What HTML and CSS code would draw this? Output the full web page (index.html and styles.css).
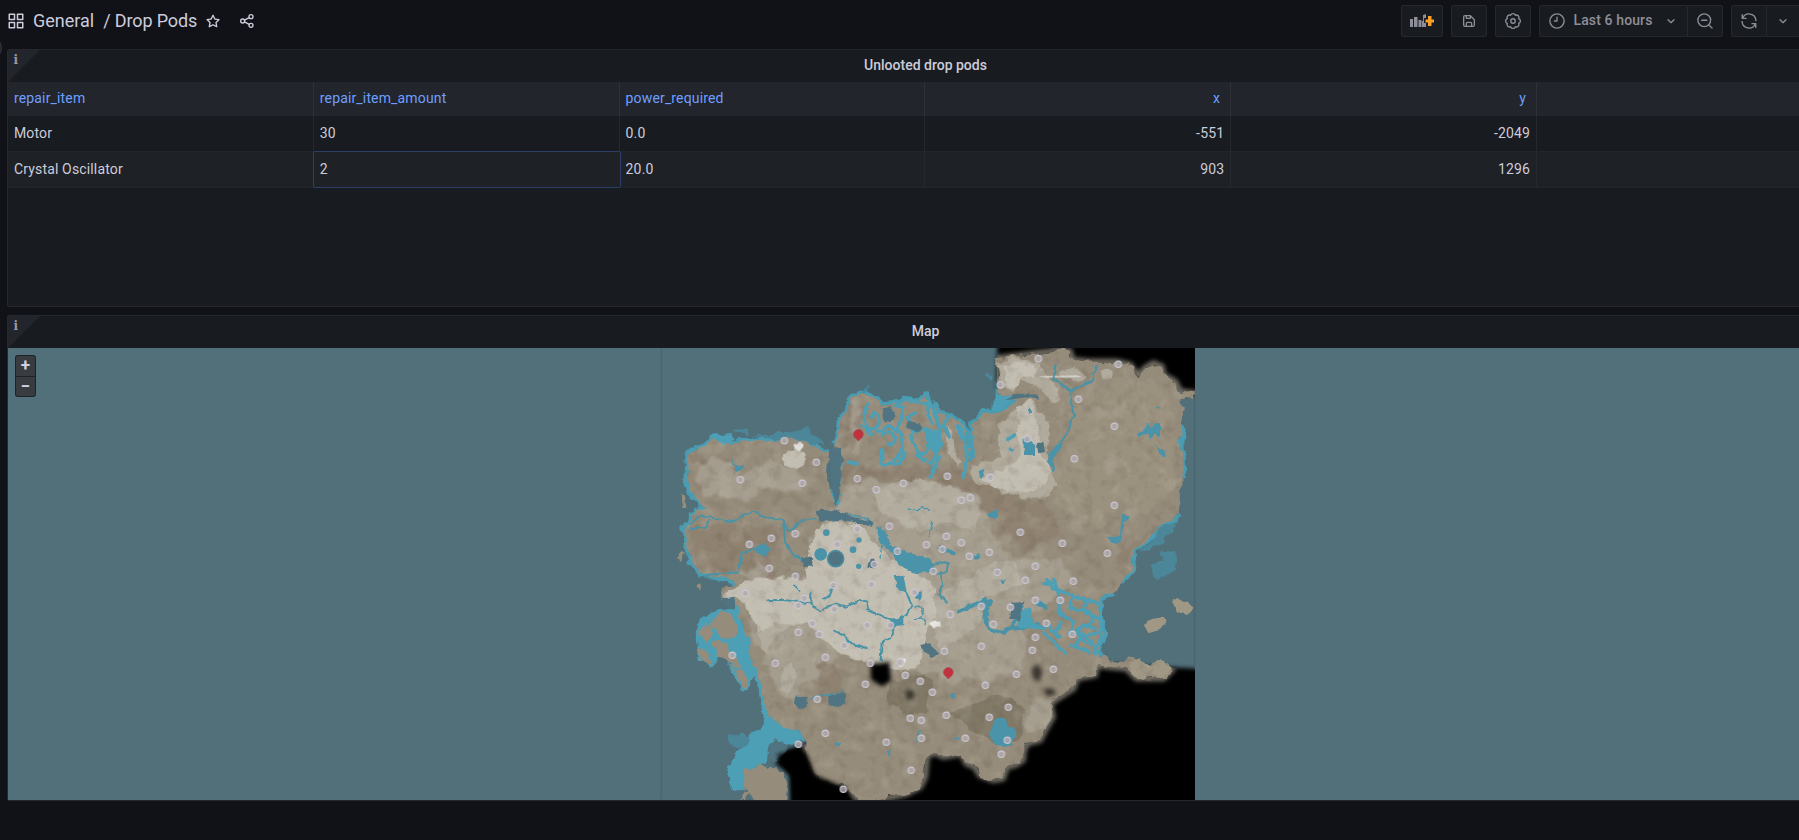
FILE: index.html
```
<!DOCTYPE html>
<html lang="en">
<head>
<meta charset="utf-8">
<title>Drop Pods</title>
<link rel="stylesheet" href="styles.css">
</head>
<body>
<div class="sidebar-toggle"></div>
<header class="toolbar">
  <nav class="crumbs">
    <svg class="icon apps" viewBox="0 0 24 24"><path d="M10,13H3a1,1,0,0,0-1,1v7a1,1,0,0,0,1,1h7a1,1,0,0,0,1-1V14A1,1,0,0,0,10,13ZM9,20H4V15H9ZM21,2H14a1,1,0,0,0-1,1v7a1,1,0,0,0,1,1h7a1,1,0,0,0,1-1V3A1,1,0,0,0,21,2ZM20,9H15V4h5Zm1,4H14a1,1,0,0,0-1,1v7a1,1,0,0,0,1,1h7a1,1,0,0,0,1-1V14A1,1,0,0,0,21,13Zm-1,7H15V15h5ZM10,2H3A1,1,0,0,0,2,3v7a1,1,0,0,0,1,1h7a1,1,0,0,0,1-1V3A1,1,0,0,0,10,2ZM9,9H4V4H9Z"/></svg>
    <span class="folder">General</span><span class="title">/ Drop Pods</span>
    <svg class="icon star" viewBox="0 0 24 24"><path d="M22,9.67A1,1,0,0,0,21.14,9l-5.69-.83L12.9,3a1,1,0,0,0-1.8,0L8.55,8.16,2.86,9a1,1,0,0,0-.81.68,1,1,0,0,0,.25,1l4.13,4-1,5.68A1,1,0,0,0,6.9,21.44L12,18.77l5.1,2.67a.93.93,0,0,0,.46.12,1,1,0,0,0,.59-.19,1,1,0,0,0,.4-1l-1-5.68,4.13-4A1,1,0,0,0,22,9.67Zm-6.15,4a1,1,0,0,0-.29.88l.72,4.2-3.76-2a1.06,1.06,0,0,0-.94,0l-3.76,2,.72-4.2a1,1,0,0,0-.29-.88l-3-3,4.21-.61a1,1,0,0,0,.76-.55L12,5.7l1.88,3.82a1,1,0,0,0,.76.55l4.21.61Z"/></svg>
    <svg class="icon share line" viewBox="0 0 24 24"><circle cx="18" cy="5.5" r="3"/><circle cx="5.5" cy="12" r="3"/><circle cx="18" cy="18.5" r="3"/><path d="M8.2 10.7l7.1-3.8M8.2 13.3l7.1 3.8"/></svg>
  </nav>
  <div class="actions">
    <button class="btn add"><svg class="panel-add" viewBox="0 0 24 14"><path class="bars" d="M0 5h3v8H0zM4 3h3.500v10H4zM8.500 6h3v7h-3zM12 7h1v6h-1zM13 1l3-1v4h-2v5h2v4h-3z"/><path class="plus" d="M18 2h3.500v3.500H24v3h-2.500V12H18V8.500h-2.500v-3H18z"/></svg></button>
    <button class="btn"><svg class="icon" viewBox="0 0 24 24"><path d="M20.710 9.290l-6-6a1,1,0,0,0-.32-.21A1.090,1.090,0,0,0,14,3H6A3,3,0,0,0,3,6V18a3,3,0,0,0,3,3H18a3,3,0,0,0,3-3V10A1,1,0,0,0,20.710,9.290ZM9,5h4V7H9Zm6,14H9V16a1,1,0,0,1,1-1h4a1,1,0,0,1,1,1Zm4-1a1,1,0,0,1-1,1H17V16a3,3,0,0,0-3-3H10a3,3,0,0,0-3,3v3H6a1,1,0,0,1-1-1V6A1,1,0,0,1,6,5H7V8A1,1,0,0,0,8,9h6a1,1,0,0,0,1-1V6.410l4,4Z"/></svg></button>
    <button class="btn"><svg class="icon line big" viewBox="0 0 24 24"><circle cx="12" cy="12" r="3"/><path d="M15.140 4.420A3.300 3.300 0 0 1 19.580 8.860A3.300 3.300 0 0 1 19.580 15.140A3.300 3.300 0 0 1 15.140 19.580A3.300 3.300 0 0 1 8.860 19.580A3.300 3.300 0 0 1 4.420 15.140A3.300 3.300 0 0 1 4.420 8.860A3.300 3.300 0 0 1 8.860 4.420A3.300 3.300 0 0 1 15.140 4.420Z"/></svg></button>
    <div class="group">
      <button class="btn time"><svg class="icon line big" viewBox="0 0 24 24"><circle cx="12" cy="12" r="9.500"/><path d="M12 7v5H8.500"/></svg><span>Last 6 hours</span><svg class="icon line chev" viewBox="0 0 24 24"><path d="M7.500 10l4.500 4.500L16.500 10"/></svg></button>
      <button class="btn"><svg class="icon line big" viewBox="0 0 24 24"><circle cx="11" cy="11" r="8.500"/><path d="M17.300 17.300l4.200 4.200M7.500 11h7"/></svg></button>
    </div>
    <div class="group">
      <button class="btn"><svg class="icon line big" viewBox="0 0 24 24"><path d="M3 3.500v5h5M3.500 8.300A9.200 9.200 0 0 1 21.200 11.500M21 20.500v-5h-5M20.500 15.700A9.200 9.200 0 0 1 2.800 12.500"/></svg></button>
      <button class="btn last"><svg class="icon line chev" viewBox="0 0 24 24"><path d="M7.500 10l4.500 4.500L16.500 10"/></svg></button>
    </div>
  </div>
</header>

<main class="dashboard">
  <section class="panel table-panel">
    <div class="corner"><span>i</span></div>
    <h2 class="panel-title">Unlooted drop pods</h2>
    <div class="row head"><div>repair_item</div><div>repair_item_amount</div><div>power_required</div><div class="num">x</div><div class="num">y</div><div></div></div>
    <div class="row"><div>Motor</div><div>30</div><div>0.0</div><div class="num">-551</div><div class="num">-2049</div><div></div></div>
    <div class="row alt"><div>Crystal Oscillator</div><div class="focus">2</div><div>20.0</div><div class="num">903</div><div class="num">1296</div><div></div></div>
  </section>

  <section class="panel map-panel">
    <div class="corner"><span>i</span></div>
    <h2 class="panel-title">Map</h2>
    <div class="map">
      <svg class="map-canvas" viewBox="8 348 1835 452">
        <defs>
          <filter id="rough" filterUnits="userSpaceOnUse" x="0" y="0" width="1620" height="1380"><feTurbulence type="fractalNoise" baseFrequency=".028" numOctaves="3" seed="4"/><feDisplacementMap in="SourceGraphic" scale="30" xChannelSelector="R" yChannelSelector="G"/><feGaussianBlur stdDeviation="2"/></filter>
          <filter id="blend" filterUnits="userSpaceOnUse" x="0" y="0" width="1620" height="1380"><feTurbulence type="fractalNoise" baseFrequency=".02" numOctaves="4" seed="14"/><feDisplacementMap in="SourceGraphic" scale="60" xChannelSelector="R" yChannelSelector="G"/><feGaussianBlur stdDeviation="3"/></filter>
          <filter id="fine" filterUnits="userSpaceOnUse" x="0" y="0" width="1620" height="1380"><feTurbulence type="fractalNoise" baseFrequency=".05" numOctaves="2" seed="7"/><feDisplacementMap in="SourceGraphic" scale="14" xChannelSelector="R" yChannelSelector="G"/><feGaussianBlur stdDeviation="1.400"/></filter>
          <filter id="glow"><feGaussianBlur stdDeviation="7"/></filter>
          <filter id="mottle" x="0" y="0" width="100%" height="100%"><feTurbulence type="fractalNoise" baseFrequency=".018" numOctaves="4" seed="9"/><feColorMatrix values="0 0 0 0 .86  0 0 0 0 .85  0 0 0 0 .8  3 0 0 0 -1.500"/></filter>
          <filter id="shade" x="0" y="0" width="100%" height="100%"><feTurbulence type="fractalNoise" baseFrequency=".03" numOctaves="4" seed="21"/><feColorMatrix values="0 0 0 0 .3  0 0 0 0 .26  0 0 0 0 .2  0 2.600 0 0 -1.300"/></filter>
          <path id="land" d="M85 330L130 300 170 288 215 300 240 285 330 290 400 280 440 290 480 312 505 322 500 380 515 440 525 490 540 470 540 400 552 350 520 300 536 270 540 230 560 190 580 157 610 145 650 165 668 182 700 178 740 170 800 155 830 205 870 215 910 240 925 300 930 350 945 340 935 280 945 225 980 200 1025 200 1045 185 1070 162 1025 150 1015 110 1008 60 1010 40 1050 35 1130 25 1170 20 1200 12 1230 20 1235 45 1290 50 1370 50 1410 60 1435 95 1455 70 1480 55 1505 65 1510 90 1545 110 1560 140 1605 145 1600 160 1565 165 1565 240 1555 280 1570 320 1565 400 1560 510 1510 540 1450 590 1420 620 1415 680 1380 710 1360 745 1320 760 1325 805 1325 875 1315 935 1370 950 1410 940 1470 965 1500 943 1535 975 1510 1000 1470 1000 1430 1000 1400 970 1350 965 1310 960 1305 990 1250 1000 1240 1030 1200 1055 1170 1075 1178 1115 1155 1155 1140 1185 1100 1195 1090 1220 1088 1245 1065 1260 1040 1265 1028 1300 1000 1305 960 1290 945 1265 920 1255 905 1225 850 1235 820 1220 800 1235 795 1295 780 1325 740 1345 700 1355 640 1365 590 1360 560 1325 520 1315 480 1305 450 1265 440 1225 435 1185 415 1155 370 1150 330 1115 315 1075 300 1005 275 945 265 885 245 835 225 775 190 765 185 735 230 715 200 700 130 690 95 650 80 620 80 540 110 495 140 490 90 440 80 400Z"/>
          <clipPath id="land-clip"><use href="#land"/></clipPath>
          <clipPath id="world"><rect x="5" y="9" width="1600" height="1356"/></clipPath>
          <clipPath id="void-clip"><path d="M1010 0H1605V150H1010ZM345 1255L380 1215 430 1200 900 1000 1320 955 1605 972V1365H385V1290Z"/></clipPath>
          <circle id="pod" r="9.500"/>
          <path id="pin" d="M0 18L-5 11A14 14 0 1 1 5 11Z"/>
        </defs>
        <g transform="translate(660 345) scale(.33333)">
          <g clip-path="url(#world)">
            <g filter="url(#rough)">
              <path class="reef" d="M230 715L200 700 130 690 95 650 80 620 80 540 110 495 140 490 90 440 80 400 85 330 130 300 170 288 215 300 240 285 330 290 400 280 440 290 480 312 505 322M515 430L525 490 540 470 540 400 552 350M520 300L536 270 540 230 560 190 580 157 610 145 650 165 668 182 700 178 740 170 800 155 830 205 870 215 910 240 925 300 930 350 945 340 935 280 945 225 980 200 1025 200 1045 185 1070 162 1025 150 1015 110M1566 240L1568 400M1562 510L1510 540 1450 590 1420 620 1415 680 1380 710M1360 745L1320 760 1325 805 1325 875 1315 935M435 1185L415 1155 370 1150 330 1115 315 1075 300 1005 275 945 265 885 245 835 225 775"/>
              <path class="reef-fill" d="M150 275L215 270 220 300 160 300ZM225 765L260 760 275 870 300 960 320 1050 325 1110 370 1150 410 1148 430 1185 400 1200 345 1185 325 1210 320 1260 260 1270 250 1335 215 1330 200 1290 225 1225 270 1180 310 1140 300 1040 280 985 265 1035 245 1045 215 970 180 930 155 965 120 945 107 885 115 830 150 800 200 790ZM1290 745L1322 760 1325 880 1310 935 1240 930ZM1190 720L1240 730 1240 800 1190 780ZM940 220L975 190 1025 195 1065 150 1025 150 1010 100 1010 170Z"/>
              <path class="reef-dim" d="M1440 620L1510 545 1548 530 1540 560 1480 610ZM1500 620L1545 615 1545 680 1490 705 1480 660 1510 650ZM220 260L260 250 270 270 400 265 430 250 500 295 380 290ZM970 85L1000 95 990 105ZM625 135L625 120 605 145ZM200 1175L260 1165 270 1195 230 1210Z"/>
            </g>
            <path class="void" filter="url(#glow)" d="M1013 -40H1660V150L1560 150 1010 130ZM345 1255L380 1215 430 1200 900 1000 1320 955 1660 974V1450H392V1290Z"/>
            <g clip-path="url(#void-clip)"><g filter="url(#glow)"><use href="#land" class="halo"/></g></g>
            <use href="#land" class="ground" filter="url(#rough)"/>
            <path class="ground" filter="url(#rough)" d="M160 820Q175 795 205 802Q232 815 228 850L215 880 190 875 160 850ZM120 850Q135 835 160 845Q165 870 140 895Q115 890 120 850ZM160 890Q185 880 205 910L235 950 245 975 225 970 170 935ZM112 915Q130 905 150 930L155 960 130 950ZM230 975L255 980 262 1035 245 1030ZM250 1270L290 1265 340 1270 375 1285 390 1330 380 1380 300 1380 250 1335ZM60 450L75 455 80 485 68 490ZM55 617L68 622 65 655 52 645ZM250 1340L262 1345 255 1365H245ZM112 725l18-4 2 12-14 6z"/>
            <path class="isle" filter="url(#fine)" d="M1452 840L1475 822 1512 816 1520 830 1500 855 1465 865ZM1535 762L1570 765 1600 790 1585 810 1548 800ZM1410 950L1440 940 1475 968 1450 1005 1415 990ZM1475 965L1502 943 1537 973 1510 1000 1480 990Z"/>
            <g clip-path="url(#land-clip)">
            <g filter="url(#blend)">
              <path class="brown" d="M95 335L220 345 240 420 200 440 110 430ZM90 545L230 530 360 560 370 640 300 680 230 690 120 670ZM560 180L600 160 620 200 600 260 550 280ZM550 350L700 370 900 365 1100 450 1080 500 900 440 700 400 550 420ZM960 430L1160 470 1200 560 1100 620 960 500ZM470 940L520 960 560 1050 540 1090 480 1050ZM270 700L350 690 340 760 280 750ZM1480 560L1560 500 1500 560 1420 620 1400 660 1370 650 1420 600Z"/>
              <path class="east" d="M1240 160L1400 90 1520 130 1550 400 1480 500 1300 540 1180 480 1210 330Z"/>
              <path class="tan" d="M100 360L160 330 210 360 220 400 300 370 330 340 440 400 420 450 320 430 250 470 130 450ZM560 420L640 405 790 410 900 430 960 450 970 520 1000 560 1060 640 1200 640 1250 700 1180 760 1080 830 1100 900 1050 1000 900 1010 760 980 640 940 520 930 400 1080 330 1000 290 900 280 800 230 730 440 690 460 560ZM1190 1060L1170 1110 1140 1170 1090 1160 1110 1080ZM250 690l40-40 50 40-30 30zM575 190l20-30 15 10-20 90 20 70-35 10z"/>
            </g>
            </g>
            <g filter="url(#rough)">
              <path class="pale" d="M650 430L780 405 860 425 930 440 960 510 940 560 850 530 780 560 650 500ZM1010 250L1060 200 1120 165 1170 250 1165 360 1190 420 1150 460 1080 460 1010 430 940 410 935 360 1030 340ZM1010 60L1060 35 1140 60 1170 100 1200 150 1170 170 1130 120 1080 110 1060 140 1020 120ZM1195 85l40-20 40 15 5 20-40 12zM1320 85l15-15 20 10 0 20-25 5zM800 770L1000 650 1060 650 1090 720 980 760 960 840 840 920ZM300 790L380 780 400 830 350 870 320 930 290 850ZM370 970L400 950 405 1010 380 1060 360 1030ZM855 240l20 20 5 50 25 40-10 15-35-50z"/>
              <path class="white" d="M455 590L480 540 550 530 610 545 650 600 700 640 760 680 820 720 830 800 800 870 780 960 740 980 620 950 540 925 490 880 450 840 360 830 300 860 280 830 260 775 180 755 250 710 340 700 440 700 440 650ZM1070 190L1110 160 1130 200 1140 330 1170 380 1140 430 1080 445 1000 425 960 400 1020 370 1080 340ZM1030 60L1080 50 1130 65 1120 90 1080 105 1065 130 1040 120ZM365 340L400 310 440 325 440 355 400 375 370 365Z"/>
              <path class="dark" d="M700 1010L790 985 820 1010 800 1100 740 1110 680 1080ZM930 1080L1020 1050 1100 1090 1080 1190 1000 1190 900 1130 860 1100Z"/>
            </g>
            <path class="snow" filter="url(#fine)" d="M400 298L420 290 430 305 418 320 405 315ZM810 830L840 830 845 845 820 850ZM715 940l20 0-5 25-15-5z"/>
            <path class="snow faint" d="M1136 93L1250 91 1268 97 1150 98Z"/>
            <g clip-path="url(#land-clip)">
              <rect class="mottle" x="5" y="9" width="1600" height="1356" filter="url(#mottle)"/>
              <rect class="shade" x="5" y="9" width="1600" height="1356" filter="url(#shade)"/>
            </g>
            <g filter="url(#fine)">
              <g class="stream">
                <path d="M90 540L120 510 160 520 210 530 280 500 310 515 370 525 385 560 420 530 470 520M370 530L375 590 400 630 440 650M245 625L300 605M245 625L235 680 130 695M90 550L140 545 150 525"/>
                <path class="thick" d="M655 545L665 590 700 615M835 605L890 630M1090 780Q1050 870 1020 860Q965 860 980 790L990 770 940 780 890 800M1060 850L1140 840M1130 770L1160 790M980 760L950 780"/>
                <path d="M1187 60L1180 100 1235 140 1300 105 1308 60M1230 145L1240 210 1225 260 1190 310 1170 345 1180 380"/>
                <path d="M320 765L370 765 450 775 480 800 520 775 560 785 600 765 625 770 620 795 660 810 700 830M700 830L740 810 755 780 740 745 710 720M710 830L690 880 665 890 662 950M520 855L550 870 575 895 625 910M455 740L450 780M520 725L510 750 490 765M840 680L850 720 835 750 865 775M400 720L420 740M815 660L865 650 860 680 830 690"/>
                <path class="thin" d="M740 492L770 494 790 490 810 492M818 528L808 580M560 505L620 520 640 540M450 1060L500 1050 550 1040M780 1155L770 1195M660 640L665 600M760 790q20-15 30 5q-5 25-25 30M775 820q25-5 20 20"/>
              </g>
              <g class="lagoon">
                <path d="M625 175Q600 220 625 250Q665 260 655 215Q635 190 635 220M665 270Q690 250 710 280Q700 305 680 295M665 310L665 360M680 240L720 260 730 310 700 350M700 175L730 190 722 230 705 260M770 200L740 220 760 260 800 250M750 270L780 330 830 300M820 190L840 250 835 320 810 360M870 210L850 240 870 280M900 240L920 320 912 400M640 270L600 240M840 330L810 400M560 350L595 360M740 165L800 175 830 200M665 360L720 355 735 320M800 260L835 280M800 180L815 240M765 330L800 345M650 265L690 240M905 280L890 240M1050 310L1060 318M1040 280L1065 272"/>
                <path d="M1155 700L1180 730 1220 745 1260 760 1320 775M1180 700L1200 760 1195 800 1240 830 1230 870M1240 745L1230 790 1290 800 1300 830 1250 860 1300 890M1320 780L1322 880 1300 930M1270 800L1320 820M1230 900L1290 920M1150 860L1190 900 1220 930M1160 840L1200 880M1270 790L1290 760M1240 910L1270 870M1265 840L1310 850M1285 870L1320 860M1205 830L1180 870M1150 720L1190 710M1250 880L1310 905"/>
              </g>
              <path class="reef-fill" d="M1085 800L1110 790 1120 835 1160 845 1150 855 1110 850 1070 845ZM790 250L840 260 850 300 830 330 800 310Z"/>
              <path class="lake" d="M280 610L310 595 335 612 310 632 285 622ZM650 545L675 555 690 600 750 625 810 640 830 680 760 685 720 665 700 630 660 590ZM215 335L225 360 255 365 230 380 220 360ZM700 690L730 690 740 740 715 735ZM1090 280L1105 280 1125 300 1125 330 1092 330ZM1165 330L1200 290 1210 300 1180 340 1185 380 1165 360ZM955 375l15-3 5 20-15 8zM1430 265L1450 260 1465 230 1470 245 1500 235 1500 275 1480 265 1475 285 1460 265 1435 275ZM1490 300l10 10 20 15-5 10-20-10zM1485 190l15-4-2 8zM1385 505L1410 515 1405 530 1390 530 1385 590 1370 600 1340 575 1380 575ZM990 1160L1005 1125 1030 1115 1045 1145 1070 1155 1055 1205 1010 1200 990 1180ZM875 1045l12 0-5 16-8-4zM525 1195l20-5-10 20zM680 1218l12 2-5 12zM765 740l20 0 0 25-20-5zM985 505l25-10 5 20-25 5zM1105 182l12 20-14 4zM940 635l20-10 5 10-15 10zM1020 705l15-2-5 14zM690 820l40 0 0 20-35 5zM880 1180l20 0-5 10z"/>
              <path class="deep" d="M470 500L480 490 540 500 580 515 640 530 635 545 580 530 540 525 480 530ZM507 310L543 305 545 400 530 490 515 430ZM665 190L695 185 705 215 695 235 675 230ZM740 230L790 240 780 260 740 250ZM425 635L460 640 455 665 430 665ZM505 1050L555 1045 555 1075 530 1090 505 1075ZM405 1055L440 1055 440 1085 415 1090 402 1075ZM1060 148L1130 145 1140 165 1110 155 1040 165ZM1055 775L1090 770 1080 830 1050 820ZM780 900L810 895 840 930 810 940ZM185 760L225 755 225 790 200 790ZM1130 295l20-5 5 30-20 5zM625 650l15-10 12 15-10 15-20-2zM325 1200l40-10 20 20-40 40-15-10z"/>
            </g>
            <g><circle class="lake" cx="499" cy="563" r="10"/><circle class="lake" cx="482" cy="628" r="19"/><circle class="deep lake-rim" cx="527" cy="641" r="24"/><circle class="lake" cx="579" cy="614" r="10"/><circle class="lake" cx="597" cy="585" r="8"/><circle class="lake" cx="596" cy="664" r="8"/></g>
            <g class="crater" filter="url(#glow)"><path d="M632 957L688 952 693 1008 665 1024 632 1002Z"/><path d="M350 1230L410 1212 440 1225 465 1290 560 1330 575 1400H400L390 1290Z"/><path class="faint" d="M735 1035h25l5 25-25 5zM1115 970l18-15 15 25-10 30-20-10zM1150 1030l30 0 10 18-30 5z"/></g>
          </g>
          <path class="edge" d="M4 9V1365M1604 160V970"/>
          <g class="pods">
            <g><use href="#pod" x="373" y="287"/><use href="#pod" x="469" y="352"/><use href="#pod" x="241" y="404"/><use href="#pod" x="427" y="415"/><use href="#pod" x="592" y="401"/><use href="#pod" x="649" y="434"/><use href="#pod" x="730" y="415"/><use href="#pod" x="406" y="566"/><use href="#pod" x="334" y="580"/><use href="#pod" x="268" y="598"/><use href="#pod" x="532" y="598"/><use href="#pod" x="592" y="553"/><use href="#pod" x="688" y="544"/><use href="#pod" x="799" y="599"/><use href="#pod" x="712" y="619"/><use href="#pod" x="643" y="658"/><use href="#pod" x="328" y="670"/><use href="#pod" x="406" y="694"/></g>
            <g transform="translate(810 0)"><use href="#pod" x="325" y="41"/><use href="#pod" x="565" y="58"/><use href="#pod" x="211" y="119"/><use href="#pod" x="445" y="163"/><use href="#pod" x="553" y="244"/><use href="#pod" x="292" y="281"/><use href="#pod" x="433" y="341"/><use href="#pod" x="52" y="394"/><use href="#pod" x="181" y="397"/><use href="#pod" x="94" y="466"/><use href="#pod" x="121" y="458"/><use href="#pod" x="553" y="481"/><use href="#pod" x="49" y="574"/><use href="#pod" x="94" y="593"/><use href="#pod" x="271" y="562"/><use href="#pod" x="397" y="595"/><use href="#pod" x="37" y="613"/><use href="#pod" x="118" y="634"/><use href="#pod" x="178" y="622"/><use href="#pod" x="532" y="625"/><use href="#pod" x="316" y="664"/><use href="#pod" x="202" y="682"/><use href="#pod" x="286" y="706"/><use href="#pod" x="430" y="709"/><use href="#pod" x="10" y="679"/></g>
            <g transform="translate(0 675)"><use href="#pod" x="256" y="70"/><use href="#pod" x="520" y="46"/><use href="#pod" x="634" y="43"/><use href="#pod" x="764" y="67"/><use href="#pod" x="433" y="85"/><use href="#pod" x="415" y="106"/><use href="#pod" x="523" y="118"/><use href="#pod" x="457" y="160"/><use href="#pod" x="415" y="187"/><use href="#pod" x="478" y="193"/><use href="#pod" x="622" y="166"/><use href="#pod" x="691" y="166"/><use href="#pod" x="217" y="256"/><use href="#pod" x="553" y="226"/><use href="#pod" x="496" y="262"/><use href="#pod" x="346" y="280"/><use href="#pod" x="631" y="280"/><use href="#pod" x="721" y="277"/><use href="#pod" x="736" y="316"/><use href="#pod" x="781" y="334"/><use href="#pod" x="616" y="343"/><use href="#pod" x="472" y="388"/><use href="#pod" x="751" y="445"/><use href="#pod" x="784" y="451"/><use href="#pod" x="496" y="490"/><use href="#pod" x="415" y="523"/><use href="#pod" x="679" y="517"/><use href="#pod" x="784" y="505"/><use href="#pod" x="754" y="601"/><use href="#pod" x="550" y="658"/></g>
            <g transform="translate(810 675)"><use href="#pod" x="316" y="91"/><use href="#pod" x="391" y="91"/><use href="#pod" x="154" y="109"/><use href="#pod" x="241" y="112"/><use href="#pod" x="61" y="133"/><use href="#pod" x="190" y="163"/><use href="#pod" x="349" y="160"/><use href="#pod" x="427" y="193"/><use href="#pod" x="316" y="202"/><use href="#pod" x="154" y="229"/><use href="#pod" x="307" y="241"/><use href="#pod" x="43" y="244"/><use href="#pod" x="370" y="298"/><use href="#pod" x="259" y="313"/><use href="#pod" x="166" y="346"/><use href="#pod" x="7" y="367"/><use href="#pod" x="235" y="412"/><use href="#pod" x="178" y="442"/><use href="#pod" x="49" y="436"/><use href="#pod" x="106" y="505"/><use href="#pod" x="232" y="511"/><use href="#pod" x="214" y="553"/></g>
          </g>
          <g class="pins"><use href="#pin" x="595" y="270"/><use href="#pin" x="865" y="984"/></g>
        </g>
      </svg>
      <div class="zoom"><button>+</button><button>−</button></div>
    </div>
  </section>
</main>
</body>
</html>
```
FILE: styles.css
```
* { box-sizing: border-box; }
body { margin: 0; height: 840px; overflow: hidden; background: #111217; color: #ccccdc; font: 14px/22px Roboto, sans-serif; letter-spacing: .15px; position: relative; }
button { font: inherit; color: inherit; letter-spacing: inherit; padding: 0; margin: 0; }
.icon { width: 16px; height: 16px; fill: currentColor; flex: none; display: block; }
.icon.line { fill: none; stroke: currentColor; stroke-width: 2; stroke-linecap: round; stroke-linejoin: round; }
.sidebar-toggle { position: absolute; left: -22px; top: 36px; width: 24px; height: 24px; border-radius: 50%; background: #22252b; border: 1px solid #34363c; }
.toolbar { width: 1800px; height: 42px; display: flex; justify-content: space-between; padding-left: 7px; }
.crumbs { display: flex; align-items: center; height: 42px; font-size: 18px; letter-spacing: 0; }
.crumbs .apps { width: 18px; height: 18px; margin-right: 8px; }
.folder { margin-right: 9px; }
.title { letter-spacing: -.14px; }
.star { margin-left: 8px; margin-right: 18px; }
.actions { display: flex; gap: 8px; padding-top: 5px; }
.btn { width: 36px; height: 32px; display: flex; align-items: center; justify-content: center; background: #181b1f; border: 1px solid #25282d; border-radius: 2px; color: #8e8e99; }
.btn.add { width: 42px; }
.panel-add { width: 24px; height: 14px; }
.bars { fill: #8e8e99; }
.plus { fill: #f9a02c; }
.icon.big { width: 18px; height: 18px; stroke-width: 1.8; }
.group { display: flex; }
.group .btn + .btn { margin-left: -1px; border-radius: 0 2px 2px 0; width: 36px; }
.group .btn.last { width: 34px; }
.btn.time { width: 149px; font-weight: 500; justify-content: flex-start; padding-left: 8px; }
.btn.time span { margin: 0 10px 2px 7.5px; letter-spacing: .12px; }
.dashboard { width: 1837px; margin-left: 7px; padding-top: 7px; display: flex; flex-direction: column; gap: 8px; }
.panel { position: relative; background: #181b1f; border: 1px solid #25282d; border-radius: 2px; }
.table-panel { height: 258px; }
.map-panel { height: 486px; }
.panel-title { margin: 0; height: 32px; line-height: 31px; text-align: center; font-size: 14px; font-weight: 500; letter-spacing: 0; }
.corner { position: absolute; left: 0; top: 0; width: 32px; height: 32px; background: #22252b; clip-path: polygon(0 0, 100% 0, 0 100%); }
.corner span { position: absolute; left: 5.5px; top: 4px; font: bold 12px/12px "DejaVu Serif", serif; color: #9a9aa6; }
.row { display: grid; grid-template-columns: repeat(6, 305.8px); height: 36px; line-height: 35px; border-bottom: 1px solid #22252b; }
.row > div { padding: 0 6px; border-right: 1px solid #25282d; }
.row.head { height: 34px; line-height: 33px; background: #22252b; color: #6e9fff; border: 0; }
.row.head > div { border-color: #2e3137; }
.row.head .num { padding-right: 10px; }
.row.alt { background: #1e2125; line-height: 34px; }
.row .num { text-align: right; }
.row .focus { border: 1px solid #2c3f66; margin: -1px -1px -1px -1px; border-radius: 2px; height: 37px; }
.map { position: relative; height: 452px; background: #52707a; overflow: hidden; }
.map-canvas { display: block; width: 1835px; height: 452px; }
.zoom { position: absolute; left: 7px; top: 7px; width: 21px; height: 42px; display: flex; flex-direction: column; gap: 1px; padding: 1px; background: #1f2226; border-radius: 3px; }
.zoom button { flex: 1; border: 0; background: #383b40; font-weight: 700; font-size: 17px; line-height: 17px; color: #d0d0e0; border-radius: 2px 2px 0 0; }
.zoom button + button { border-radius: 0 0 2px 2px; }
.map-canvas filter { color-interpolation-filters: sRGB; }
.reef { fill: none; stroke: #4a9cb2; stroke-width: 20; stroke-linejoin: round; }
.reef-fill { fill: #4c9fb5; }
.reef-dim { fill: #4c8799; }
.void { fill: #000; }
.halo { fill: none; stroke: #77736a; stroke-width: 18; }
.ground { fill: #968c7b; }
.isle { fill: #a09784; }
.brown { fill: #8d806f; opacity: .8; }
.east { fill: #9b917f; }
.tan { fill: #a8a193; opacity: .85; }
.pale { fill: #b3ada0; opacity: .9; }
.white { fill: #c3beb2; }
.snow { fill: #e8e7e3; }
.dark { fill: #7c7362; opacity: .8; }
.mottle { opacity: .17; }
.shade { opacity: .16; }
.stream { fill: none; stroke: #4a93a6; stroke-width: 6; stroke-linejoin: round; }
.thick { stroke-width: 13; }
.thin { stroke-width: 4; }
.lagoon { fill: none; stroke: #4c9fb5; stroke-width: 10; stroke-linejoin: round; }
.lake { fill: #4a93a8; }
.deep { fill: #507482; }
.lake-rim { stroke: #4a8da0; stroke-width: 5; }
.crater { fill: #000; }
.faint { opacity: .6; }
.edge { fill: none; stroke: #47636d; stroke-width: 3; }
.pods { fill: #b0abad; fill-opacity: .8; stroke: #cdc8d6; stroke-width: 3.5; }
.pins { fill: #c4303e; stroke: #a8283a; stroke-width: 2; }
```
